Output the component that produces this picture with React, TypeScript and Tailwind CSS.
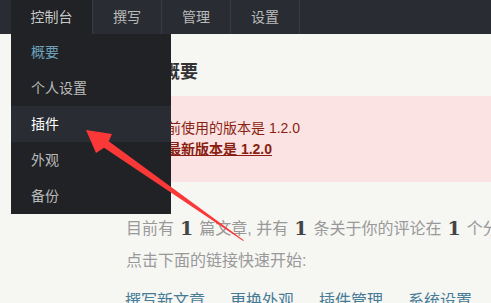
import React from "react";

const tabs = ["撰写", "管理", "设置"];
const menu = ["概要", "个人设置", "插件", "外观", "备份"];

function Num() {
  return (
    <span className="font-['DejaVu_Serif',serif] text-[19px] font-bold text-[#444] mx-[6px] align-[-1px]">1</span>
  );
}

export default function App() {
  return (
    <div className="relative w-[491px] h-[303px] overflow-hidden bg-[#f6f6f3] font-['Liberation_Sans','Noto_Sans_CJK_SC',sans-serif]">
      <nav className="h-[34px] bg-[#292d33] flex pl-[11px] text-[14px]">
        <div className="w-[82px] flex items-center justify-center bg-[#202225] text-[#c8c8c8] border-r border-[#383d45]">控制台</div>
        {tabs.map((t) => (
          <div key={t} className="w-[69px] flex items-center justify-center text-[#bbb] border-r border-[#383d45]">{t}</div>
        ))}
      </nav>

      <main className="pl-[126px]">
        <h2 className="mt-[26px] mb-[12px] text-[18px] leading-[24px] font-bold text-[#333]">网站概要</h2>
        <div className="bg-[#fbe3e4] text-[#8a1f11] text-[14px] leading-[21px] pl-[13px] pt-[22px] pb-[22px]">
          <p>您当前使用的版本是 1.2.0</p>
          <p><a className="font-bold underline">官方最新版本是 1.2.0</a></p>
        </div>
        <p className="mt-[30px] text-[16px] leading-[32px] text-[#999] whitespace-nowrap">
          目前有<Num />篇文章, 并有<Num />条关于你的评论在<Num />个分类中.
        </p>
        <p className="text-[16px] leading-[32px] text-[#999] whitespace-nowrap">点击下面的链接快速开始:</p>
        <div className="mt-[8px] flex gap-[25px] text-[16px] leading-[32px] text-[#467b96] whitespace-nowrap -ml-px">
          <a>撰写新文章</a>
          <a>更换外观</a>
          <a>插件管理</a>
          <a>系统设置</a>
        </div>
      </main>

      <div className="absolute left-[11px] top-[34px] w-[160px] bg-[#202225] text-[14px]">
        {menu.map((m, i) => (
          <div
            key={m}
            className={
              i === 0
                ? "h-[36px] pl-[20px] flex items-center text-[#6da1bb]"
                : i === 2
                ? "h-[36px] pl-[20px] flex items-center text-white bg-[#292d33]"
                : "h-[36px] pl-[20px] flex items-center text-[#bbb]"
            }
          >
            {m}
          </div>
        ))}
      </div>

      <svg className="absolute inset-0 pointer-events-none" width="491" height="303" viewBox="0 0 491 303">
        <polygon
          points="86,130 112,134 108.7,141.2 243.8,240.2 243.2,241 104.1,147.8 96,153"
          fill="#fb3838"
        />
      </svg>
    </div>
  );
}
